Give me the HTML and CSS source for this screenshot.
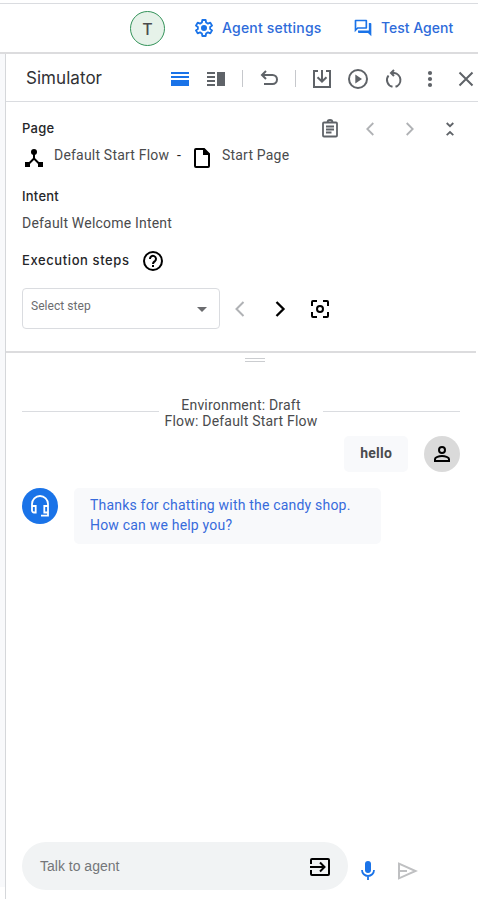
FILE: index.html
```html
<!DOCTYPE html>
<html lang="en">
<head>
<meta charset="utf-8">
<title>Simulator</title>
<link rel="stylesheet" href="styles.css">
</head>
<body>
<header class="topbar">
  <div class="avatar">T</div>
  <a class="toplink settings">
    <svg width="22" height="22" viewBox="0 0 24 24"><path fill="none" stroke="currentColor" stroke-width="2" stroke-linejoin="round" d="M10.200 3.300h3.600l.5 2.700 2 1.200 2.600-1 1.900 3.200-2.100 1.600v2l2.100 1.600-1.900 3.200-2.600-1-2 1.200-.5 2.700h-3.600L9.700 18l-2-1.200-2.600 1-1.900-3.200L5.300 13v-2L3.200 9.400l1.900-3.200 2.600 1 2-1.200z"/><circle cx="12" cy="12" r="3.300" fill="currentColor"/></svg>
    <span>Agent settings</span>
  </a>
  <a class="toplink test">
    <svg width="20" height="20" viewBox="0 0 24 24"><path fill="currentColor" d="M15 4v7H5.170L4 12.170V4h11m1-2H3c-.55 0-1 .45-1 1v14l4-4h10c.55 0 1-.45 1-1V3c0-.55-.45-1-1-1zm5 4h-2v9H6v2c0 .55.45 1 1 1h11l4 4V7c0-.55-.45-1-1-1z"/></svg>
    <span>Test Agent</span>
  </a>
</header>
<div class="body">
  <div class="gutter"></div>
  <main class="simulator">
    <div class="toolbar">
      <h1>Simulator</h1>
      <div class="slot blue"><svg width="18" height="14" viewBox="0 0 18 14"><path fill="currentColor" d="M0 0h18v2H0zM0 4h18v2H0zM0 8h18v6H0z"/></svg></div>
      <div class="slot"><svg width="18" height="14" viewBox="0 0 18 14"><path fill="currentColor" d="M0 0h8v2H0zM0 4h8v2H0zM0 8h8v2H0zM0 12h8v2H0zM10 0h8v14h-8z"/></svg></div>
      <div class="sep"></div>
      <div class="slot"><svg width="20" height="20" viewBox="0 0 20 20" fill="none" stroke="currentColor" stroke-width="2"><path d="M7 2 3 6l4 4M3.200 6H13.500a4.500 4.500 0 0 1 0 9H5"/></svg></div>
      <div class="sep"></div>
      <div class="slot"><svg width="20" height="20" viewBox="0 0 20 20" fill="none" stroke="currentColor" stroke-width="2"><path d="M6 2H2v16h16V2h-4M10 1v11M5.500 8.200 10 12.500 14.500 8.200"/></svg></div>
      <div class="slot"><svg width="20" height="20" viewBox="0 0 20 20"><circle cx="10" cy="10" r="9" fill="none" stroke="currentColor" stroke-width="2"/><path fill="currentColor" d="M7.300 5.600v8.800L14 10z"/></svg></div>
      <div class="slot"><svg width="20" height="20" viewBox="0 0 20 20" fill="none" stroke="currentColor" stroke-width="2"><path d="M8.500 17.800A7.100 7.100 0 0 1 4.500 6.500M11.500 17.800A7.100 7.100 0 0 0 10.200 4H7.500M10 1 7 4l3 3"/></svg></div>
      <div class="slot"><svg width="20" height="20" viewBox="0 0 20 20" fill="currentColor"><circle cx="10" cy="4" r="2.100"/><circle cx="10" cy="10" r="2.100"/><circle cx="10" cy="16" r="2.100"/></svg></div>
      <div class="slot"><svg width="16" height="16" viewBox="0 0 16 16" fill="none" stroke="currentColor" stroke-width="2"><path d="m1.500 1.500 13 13m0-13-13 13"/></svg></div>
    </div>
    <section class="details">
      <div class="row page-head">
        <h2>Page</h2>
        <div class="cell"><svg width="20" height="20" viewBox="0 0 20 20" fill="none" stroke="currentColor" stroke-width="1.800"><rect x="3" y="3.500" width="14" height="14" rx="1"/><path d="M6 7.500h8M6 10.500h8M6 13.500h5.500"/><path d="M7.500 3.500a2.500 2.500 0 0 1 5 0"/></svg></div>
        <div class="cell dim"><svg width="16" height="16" viewBox="0 0 16 16" fill="none" stroke="currentColor" stroke-width="1.800"><path d="M11.300 2 5.300 8l6 6"/></svg></div>
        <div class="cell dim"><svg width="16" height="16" viewBox="0 0 16 16" fill="none" stroke="currentColor" stroke-width="1.800"><path d="m4.700 2 6 6-6 6"/></svg></div>
        <div class="cell"><svg width="16" height="16" viewBox="0 0 16 16" fill="none" stroke="currentColor" stroke-width="1.800"><path d="M4.700 2 8 5.200 11.300 2M4.700 14.200 8 11l3.300 3.200"/></svg></div>
      </div>
      <div class="row crumbs">
        <svg class="flow" width="24" height="20" viewBox="0 0 24 20"><circle cx="12" cy="4" r="3"/><path d="M3 14h5v5H3zM16 14h5v5h-5z"/><path d="M12 5v5.500L6 16.500M12 10.500l6 6" fill="none" stroke="#000" stroke-width="2"/></svg>
        <span class="flow-name">Default Start Flow</span>
        <span class="dash">-</span>
        <svg class="doc" width="16" height="20" viewBox="0 0 16 20"><path fill-rule="evenodd" d="M2 0h8.500L16 5.500V18a2 2 0 0 1-2 2H2a2 2 0 0 1-2-2V2a2 2 0 0 1 2-2zm0 2v16h12V7H9V2z"/></svg>
        <span class="page-name">Start Page</span>
      </div>
      <h2 class="intent-title">Intent</h2>
      <p class="intent">Default Welcome Intent</p>
      <div class="row steps-head">
        <h2>Execution steps</h2>
        <svg width="20" height="20" viewBox="0 0 20 20" fill="none" stroke="#000" stroke-width="2"><circle cx="10" cy="10" r="9"/><path d="M7 8a3 3 0 1 1 5 2.100c-1 .8-2 1.300-2 2.900"/><path d="M10 14v2"/></svg>
      </div>
      <div class="row steps">
        <div class="select"><span>Select step</span><i class="caret"></i></div>
        <div class="cell dim"><svg width="20" height="20" viewBox="0 0 20 20" fill="none" stroke="currentColor" stroke-width="2"><path d="m13.500 3-7 7 7 7"/></svg></div>
        <div class="cell black"><svg width="20" height="20" viewBox="0 0 20 20" fill="none" stroke="currentColor" stroke-width="2.300"><path d="m6.500 3 7 7-7 7"/></svg></div>
        <div class="cell black"><svg width="18" height="18" viewBox="0 0 18 18" fill="none" stroke="currentColor" stroke-width="2"><path d="M1 6V2a1 1 0 0 1 1-1h4M12 1h4a1 1 0 0 1 1 1v4M17 12v4a1 1 0 0 1-1 1h-4M6 17H2a1 1 0 0 1-1-1v-4"/><circle cx="9" cy="9" r="3"/></svg></div>
      </div>
    </section>
    <div class="resize"><i></i></div>
    <section class="chat">
      <div class="environment"><hr><p><span>Environment: Draft</span><br><span>Flow: Default Start Flow</span></p><hr></div>
      <div class="user-message">
        <div class="bubble"><b>hello</b></div>
        <div class="user"><svg width="16" height="16" viewBox="0 0 16 16" fill="none" stroke="#000" stroke-width="2"><circle cx="8" cy="4" r="3"/><path d="M1 15v-2c0-1.800 4-3 7-3s7 1.200 7 3v2z"/></svg></div>
      </div>
      <div class="agent-message">
        <div class="bot"><svg width="20" height="24" viewBox="0 0 20 24" fill="none" stroke="#fff" stroke-width="1.800"><path d="M2 12v-2a8 8 0 0 1 16 0v11.700h-7M2 12h3.700v6.500H4a2 2 0 0 1-2-2zM18 12h-3.700v6.500H18"/></svg></div>
        <div class="bubble reply">Thanks for chatting with the candy shop.<br>How can we help you?</div>
      </div>
    </section>
    <footer class="composer">
      <div class="input"><span>Talk to agent</span><svg width="20" height="18" viewBox="0 0 20 18" fill="none" stroke="#000" stroke-width="2"><path d="M1 6V2a1 1 0 0 1 1-1h16a1 1 0 0 1 1 1v14a1 1 0 0 1-1 1H2a1 1 0 0 1-1-1v-4M0 9h13.500M10 4.500 14.500 9 10 13.500"/></svg></div>
      <svg class="mic" width="14" height="19" viewBox="0 0 14 19"><rect x="4" y="0" width="6" height="12" rx="3" fill="currentColor"/><path d="M1 9a6 6 0 0 0 12 0M7 15v4" fill="none" stroke="currentColor" stroke-width="1.800"/></svg>
      <svg class="send" width="20" height="18" viewBox="0 0 20 18" fill="none" stroke="currentColor" stroke-width="2"><path d="M1 1.700 17.500 9 1 16.300zM1 9h8"/></svg>
    </footer>
  </main>
</div>
</body>
</html>
```

FILE: styles.css
```css
* { box-sizing: border-box; }
body { margin: 0; height: 899px; padding-top: 3px; background: #fff; color: #4a4b4d; font: 14px/20px Roboto, sans-serif; letter-spacing: .2px; overflow: hidden; }
svg { display: block; flex: none; }
h1, h2, p { margin: 0; }
h1, h2, .toplink { font-family: Inter, sans-serif; white-space: nowrap; }
.topbar { display: flex; align-items: center; height: 51px; border-top: 1px solid #dadce0; border-bottom: 2px solid #dcdcde; padding-left: 130px; }
.avatar { width: 35px; height: 35px; border: 1px solid #34935a; border-radius: 50%; background: #e6f2e9; font: 500 16px/34px Inter, sans-serif; text-align: center; }
.toplink { display: flex; align-items: center; color: #2e6bda; font-size: 14px; font-weight: 500; letter-spacing: 0; }
.toplink svg { color: #1a73e8; }
.settings { margin-left: 28px; gap: 7px; width: 160px; letter-spacing: .2px; }
.test { gap: 8px; }
.body { display: flex; height: 845px; }
.gutter { width: 5px; height: 833px; background: #f8f9fb; }
.simulator { display: flex; flex-direction: column; width: 473px; border-left: 1px solid #d5d7da; }
.toolbar { display: flex; align-items: center; height: 48px; flex: none; border-bottom: 1px solid #dadce0; padding: 2px 0 0 20px; color: #5f6368; }
h1 { width: 136px; flex: none; font-size: 17px; font-weight: 400; line-height: 24px; letter-spacing: .05px; color: #303134; margin-top: -2px; }
.slot { display: flex; justify-content: center; flex: none; width: 36px; }
.blue { color: #1a73e8; }
.sep { width: 1px; height: 17px; background: #c6c8cc; margin: 0 8px; flex: none; }
.details { width: 470px; height: 251px; flex: none; padding: 16px 10px 0 16px; border-bottom: 2px solid #dcdcde; }
h2 { font-size: 13px; line-height: 20px; font-weight: 500; color: #252629; letter-spacing: .25px; }
.row { display: flex; align-items: center; }
.page-head { height: 21px; }
.page-head h2 { width: 288px; margin-top: -1px; }
.cell { display: flex; justify-content: center; width: 40px; flex: none; color: #5f6368; }
.page-head .cell:last-child { margin-right: -20px; }
.cell.dim { color: #b0b2b5; }
.cell.black { color: #000; }
.crumbs { height: 32px; white-space: nowrap; align-items: flex-start; padding-top: 6px; }
.flow { margin-top: 3px; }
.flow-name { margin-left: 8px; width: 123px; }
.dash { width: 17px; color: #222; }
.doc { margin-top: 3px; }
.page-name { margin-left: 12px; }
.intent-title { margin-top: 15px; }
.intent { margin-top: 7px; }
.steps-head { height: 20px; margin-top: 18px; }
.steps-head h2 { width: 121px; letter-spacing: .6px; margin-top: -2px; }
.steps { margin-top: 16px; height: 42px; }
.steps .cell { padding-top: 2px; }
.select { display: flex; justify-content: space-between; width: 198px; height: 41px; border: 1px solid #dadce0; border-radius: 4px; padding: 8px 12px 0 8px; font-size: 12px; line-height: 18px; letter-spacing: .05px; color: #6b6c6f; }
.caret { width: 10px; height: 5px; margin-top: 10px; border: 5px solid transparent; border-top-color: #6b6c6f; border-bottom: 0; }
.resize { height: 44px; flex: none; padding: 5px 0 0 239px; }
.resize i { display: block; width: 20px; height: 4px; border: solid #cbcdd0; border-width: 1px 0; }
.chat { height: 445px; flex: none; padding: 0 18px 0 16px; }
.environment { display: flex; width: 438px; line-height: 16px; text-align: center; }
.environment p { width: 164px; white-space: nowrap; }
hr { width: 137px; height: 1px; margin: 14px 0 0; border: 0; background: #dadce0; }
.user-message { display: flex; justify-content: flex-end; gap: 16px; width: 438px; margin-top: 7px; }
.bubble { height: 36px; padding: 7px 16px; border-radius: 5px; background: #f8f9fb; }
.user, .bot { display: flex; align-items: center; justify-content: center; width: 36px; height: 36px; flex: none; border-radius: 50%; background: #dadada; }
.bot { background: #1a73e8; }
.agent-message { display: flex; gap: 16px; margin-top: 16px; }
.reply { width: 307px; height: 56px; color: #376bdb; white-space: nowrap; }
.composer { display: flex; padding-left: 16px; }
.input { display: flex; align-items: center; justify-content: space-between; width: 326px; height: 48px; border-radius: 24px; background: #f1f3f4; padding: 1px 18px 0; color: #747679; font-family: "Liberation Sans", sans-serif; letter-spacing: 0; }
.input span { margin-top: -2px; }
.mic { color: #1a73e8; margin: 19px 0 0 13px; }
.send { color: #bfc0c2; margin: 20px 0 0 23px; }
```
